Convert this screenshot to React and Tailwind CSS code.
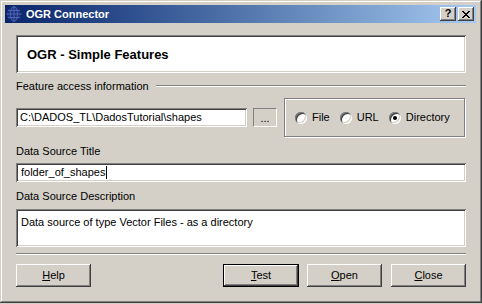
import React from "react";

const raised =
  "shadow-[inset_-1px_-1px_#404040,inset_1px_1px_#ffffff,inset_-2px_-2px_#808080,inset_2px_2px_#d4d0c8]";
const sunken =
  "shadow-[inset_1px_1px_#808080,inset_-1px_-1px_#ffffff,inset_2px_2px_#404040,inset_-2px_-2px_#d4d0c8]";

const Globe = () => (
  <svg width="16" height="16" viewBox="0 0 16 16">
    <circle cx="8" cy="8" r="7.5" fill="#1d2f78" />
    <ellipse cx="8" cy="8" rx="3.5" ry="7.5" fill="none" stroke="#4a66b8" strokeWidth="1" />
    <line x1="0.5" y1="8" x2="15.5" y2="8" stroke="#4a66b8" />
    <line x1="8" y1="0.5" x2="8" y2="15.5" stroke="#4a66b8" />
    <path d="M2 4.5 H14 M2 11.5 H14" stroke="#4a66b8" />
  </svg>
);

const Radio = ({ checked, label }) => (
  <label className="flex items-center gap-[5px]">
    <span
      className={`w-[12px] h-[12px] rounded-full bg-white flex items-center justify-center shadow-[inset_1px_1px_#808080,inset_-1px_-1px_#ffffff,inset_2px_2px_#404040,inset_-2px_-2px_#d4d0c8]`}
    >
      {checked && <span className="w-[4px] h-[4px] rounded-full bg-black" />}
    </span>
    <span>{label}</span>
  </label>
);

const Etched = ({ className = "" }) => (
  <div className={`h-[2px] border-t border-t-[#808080] border-b border-b-white ${className}`} />
);

const Btn = ({ children, isDefault }) => (
  <button
    className={`w-[75px] h-[23px] bg-[#d4d0c8] ${raised} ${
      isDefault ? "border border-black w-[76px]" : ""
    } flex items-center justify-center`}
  >
    {children}
  </button>
);

export default function App() {
  return (
    <div className="w-[482px] h-[304px] bg-[#d4d0c8] text-[11px] text-black font-['Liberation_Sans',Arial,sans-serif] overflow-hidden">
      <div
        className={`w-[482px] h-[303px] px-[5px] pt-[5px] shadow-[inset_-1px_-1px_#404040,inset_1px_1px_#d4d0c8,inset_-2px_-2px_#808080,inset_2px_2px_#ffffff]`}
      >
        {/* title bar */}
        <div className="h-[18px] mr-[1px] flex items-center bg-gradient-to-r from-[#0a246a] to-[#a6caf0] pl-[1px] pr-[2px]">
          <Globe />
          <span className="ml-[4px] text-white font-bold text-[11px]">OGR Connector</span>
          <div className="ml-auto flex gap-[2px]">
            <div className={`w-[16px] h-[14px] bg-[#d4d0c8] ${raised} flex items-center justify-center font-bold text-[11px] leading-none pb-[1px]`}>
              ?
            </div>
            <div className={`w-[16px] h-[14px] bg-[#d4d0c8] ${raised} flex items-center justify-center`}>
              <svg width="8" height="7" viewBox="0 0 8 7">
                <path d="M0 0 L7 7 M1 0 L8 7 M7 0 L0 7 M8 0 L1 7" stroke="black" strokeWidth="1" />
              </svg>
            </div>
          </div>
        </div>

        <div className="px-[11px] flex flex-col">
          {/* header */}
          <div className={`mt-[12px] h-[38px] bg-white ${sunken} flex items-center pl-[11px]`}>
            <span className="font-bold text-[13px] pt-[2px]">OGR - Simple Features</span>
          </div>

          {/* feature access */}
          <div className="mt-[6px] h-[14px] flex items-center">
            <span>Feature access information</span>
            <Etched className="flex-1 ml-[7px] mt-[-1px]" />
          </div>

          <div className="mt-[5px] h-[39px] flex items-center">
            <div className={`w-[231px] h-[19px] bg-white ${sunken} flex items-center pl-[4px]`}>
              C:\DADOS_TL\DadosTutorial\shapes
            </div>
            <div className="ml-[6px] w-[24px] h-[19px] border border-t-[#808080] border-l-[#808080] border-b-white border-r-white flex items-end justify-center pb-[2px] leading-none">
              ...
            </div>
            <div className="ml-[7px] w-[181px] h-[39px] border border-[#808080] shadow-[inset_1px_1px_#ffffff,1px_1px_#ffffff] flex items-center pl-[10px] gap-[10px]">
              <Radio label="File" />
              <Radio label="URL" />
              <Radio label="Directory" checked />
            </div>
          </div>

          <div className="mt-[7px] h-[14px] flex items-center">Data Source Title</div>
          <div className={`mt-[5px] h-[19px] bg-white ${sunken} flex items-center pl-[5px]`}>
            <span>folder_of_shapes</span>
            <span className="w-[1px] h-[13px] bg-black ml-[1px]" />
          </div>

          <div className="mt-[7px] h-[14px] flex items-center">Data Source Description</div>
          <div className={`mt-[6px] h-[38px] bg-white ${sunken} pl-[5px] pt-[5px]`}>
            Data source of type Vector Files - as a directory
          </div>

          <Etched className="mt-[6px]" />

          <div className="mt-[9px] flex items-center">
            <Btn>
              <span><u>H</u>elp</span>
            </Btn>
            <div className="flex-1" />
            <Btn isDefault>
              <span><u>T</u>est</span>
            </Btn>
            <div className="ml-[8px]">
              <Btn>
                <span><u>O</u>pen</span>
              </Btn>
            </div>
            <div className="ml-[9px]">
              <Btn>
                <span><u>C</u>lose</span>
              </Btn>
            </div>
          </div>
        </div>
      </div>
    </div>
  );
}
